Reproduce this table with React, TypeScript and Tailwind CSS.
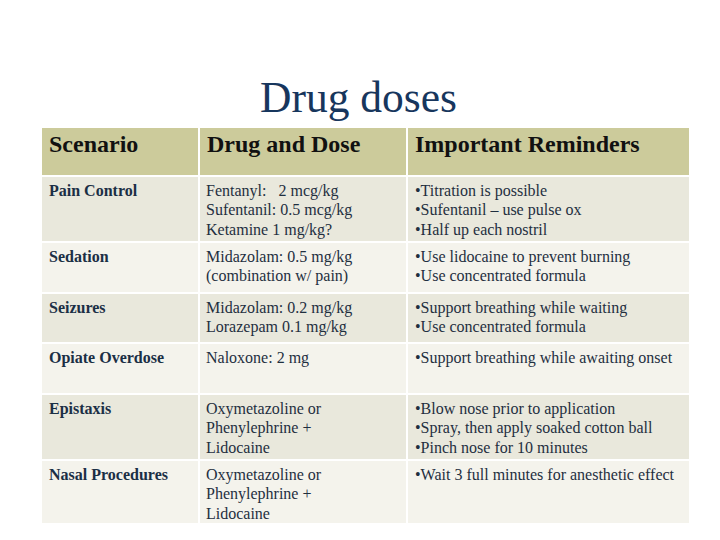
const ROWS = [
  {
    scenario: "Pain Control",
    drug: ["Fentanyl:   2 mcg/kg", "Sufentanil: 0.5 mcg/kg", "Ketamine 1 mg/kg?"],
    notes: ["Titration is possible", "Sufentanil – use pulse ox", "Half up each nostril"],
    h: "h-[64px]",
    tone: "bg-[#e9e8dc]",
  },
  {
    scenario: "Sedation",
    drug: ["Midazolam: 0.5 mg/kg", "(combination w/ pain)"],
    notes: ["Use lidocaine to prevent burning", "Use concentrated formula"],
    h: "h-[49px]",
    tone: "bg-[#f4f3ec]",
  },
  {
    scenario: "Seizures",
    drug: ["Midazolam: 0.2 mg/kg", "Lorazepam 0.1 mg/kg"],
    notes: ["Support breathing while waiting", "Use concentrated formula"],
    h: "h-[48px]",
    tone: "bg-[#e9e8dc]",
  },
  {
    scenario: "Opiate Overdose",
    drug: ["Naloxone: 2 mg"],
    notes: ["Support breathing while awaiting onset"],
    h: "h-[49px]",
    tone: "bg-[#f4f3ec]",
  },
  {
    scenario: "Epistaxis",
    drug: ["Oxymetazoline or", "Phenylephrine +", "Lidocaine"],
    notes: ["Blow nose prior to application", "Spray, then apply soaked cotton ball", "Pinch nose for 10 minutes"],
    h: "h-[64px]",
    tone: "bg-[#e9e8dc]",
  },
  {
    scenario: "Nasal Procedures",
    drug: ["Oxymetazoline or", "Phenylephrine +", "Lidocaine"],
    notes: ["Wait 3 full minutes for anesthetic effect"],
    h: "h-[62px]",
    tone: "bg-[#f4f3ec]",
  },
];

const HEADERS = ["Scenario", "Drug and Dose", "Important Reminders"];

export default function App() {
  return (
    <div className="h-[540px] w-[720px] bg-white font-['Liberation_Serif',serif]">
      {/* title */}
      <h1 className="pt-[76px] pr-[3px] text-center text-[43.5px] leading-none font-normal text-[#17365d]">
        Drug doses
      </h1>

      {/* table */}
      <div className="mt-[8px] ml-[42px] grid w-[647px] grid-cols-[156px_206px_281px] gap-[2px]">
        {HEADERS.map((t) => (
          <div
            key={t}
            className="h-[47px] bg-[#cccb9b] px-[7px] pt-[3px] text-[24px] leading-[26px] font-bold text-[#111111]"
          >
            {t}
          </div>
        ))}

        {ROWS.map((r) => (
          <div key={r.scenario} className="contents">
            <div className={`${r.h} ${r.tone} px-[7px] pt-[4px] text-[16px] leading-[19.5px] font-bold text-[#1b2f45]`}>
              {r.scenario}
            </div>
            <div className={`${r.h} ${r.tone} px-[6px] pt-[4px] text-[16px] leading-[19.5px] text-[#1f2f3f]`}>
              {r.drug.map((d) => (
                <div key={d} className="whitespace-pre">
                  {d}
                </div>
              ))}
            </div>
            <div className={`${r.h} ${r.tone} px-[7px] pt-[4px] text-[16px] leading-[19.5px] text-[#1f2f3f]`}>
              {r.notes.map((n) => (
                <div key={n} className="whitespace-nowrap">
                  •{n}
                </div>
              ))}
            </div>
          </div>
        ))}
      </div>
    </div>
  );
}
